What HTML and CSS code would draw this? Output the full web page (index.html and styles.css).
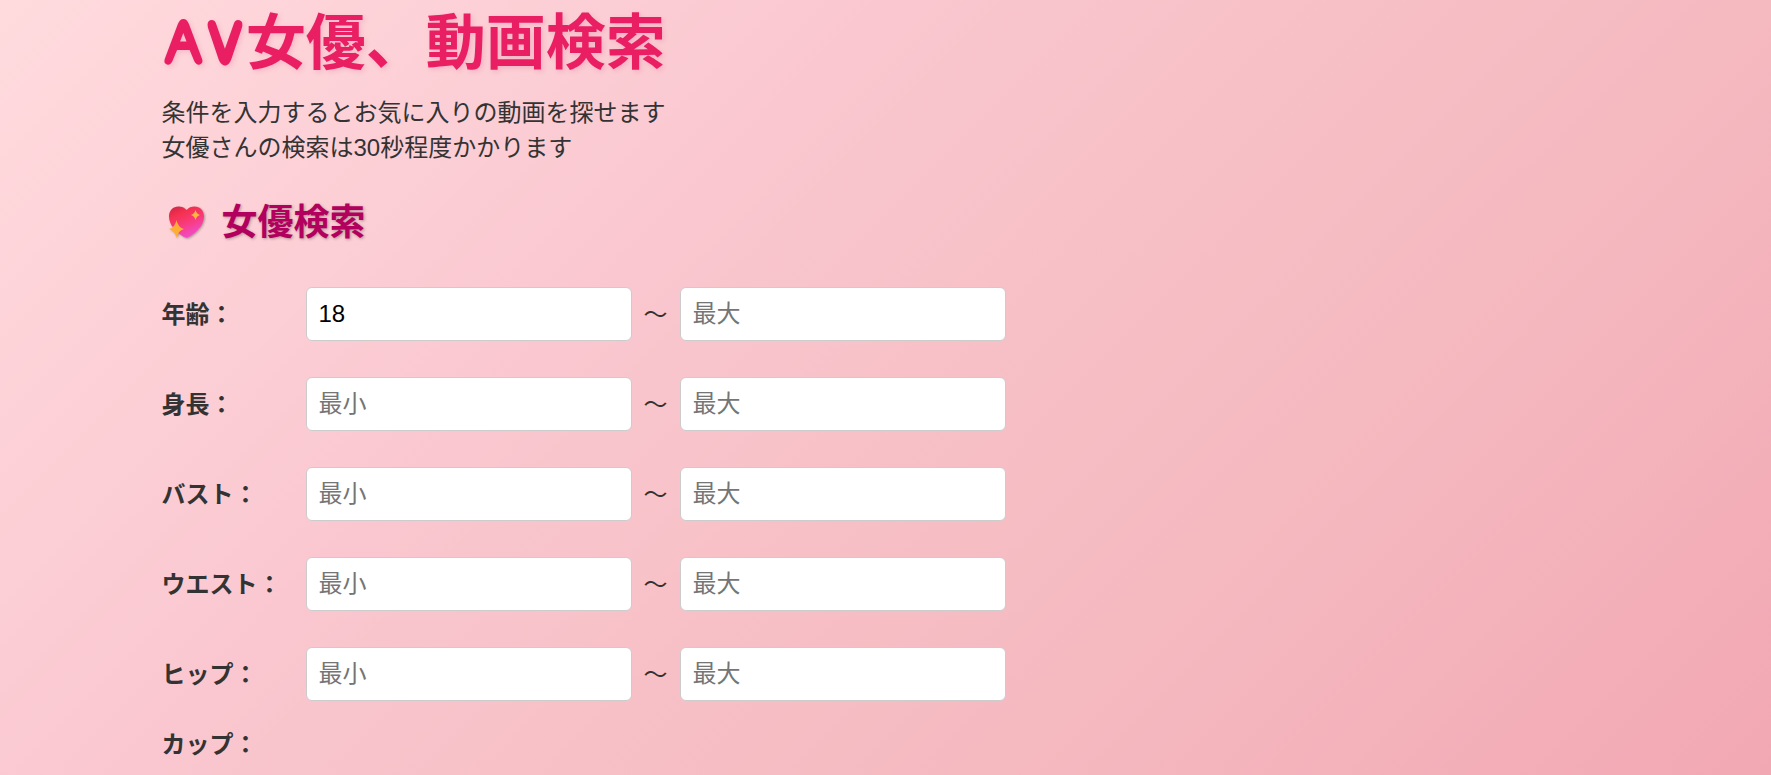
FILE: index.html
```
<!DOCTYPE html>
<html lang="ja">
<head>
<meta charset="utf-8">
<title>AV女優、動画検索</title>
<link rel="stylesheet" href="styles.css">
</head>
<body>
<main class="page">
  <h1 class="title">AV女優、動画検索</h1>
  <p class="lead">条件を入力するとお気に入りの動画を探せます<br>女優さんの検索は30秒程度かかります</p>
  <h2 class="section-title">
    <svg class="heart" viewBox="0 0 48 36" aria-hidden="true">
      <defs>
        <linearGradient id="heart-fill" x1="0" y1="0" x2="0.5" y2="1">
          <stop offset="0" stop-color="#c92448"/>
          <stop offset="0.3" stop-color="#f5304f"/>
          <stop offset="0.6" stop-color="#f83a78"/>
          <stop offset="1" stop-color="#f24bc8"/>
        </linearGradient>
      </defs>
      <path fill="url(#heart-fill)" d="M24.500 5C22.500 2.500 19.500 1.500 16.500 1.500C11 1.500 7 5.500 7 11.500C7 20 14 27 22 32Q24.500 33.500 27 32C35 27 42 20 42 11.500C42 5.500 38 1.500 32.500 1.500C29.500 1.500 26.500 2.500 24.500 5Z"/>
      <path fill="#ffb83d" d="M33.500 5Q34.500 9 38 10Q34.500 11 33.500 15Q32.500 11 29 10Q32.500 9 33.500 5Z"/>
      <path fill="#ffae35" d="M14.500 15Q16 22.500 22 24Q16 25.500 14.500 33Q13 25.500 7 24Q13 22.500 14.500 15Z"/>
    </svg>
    <span>女優検索</span>
  </h2>
  <form class="search">
    <div class="row">
      <label class="label" for="age-min">年齢：</label>
      <input class="field" id="age-min" type="text" value="18" placeholder="最小">
      <span>～</span>
      <input class="field" type="text" placeholder="最大" aria-label="年齢 最大">
    </div>
    <div class="row">
      <label class="label" for="height-min">身長：</label>
      <input class="field" id="height-min" type="text" placeholder="最小">
      <span>～</span>
      <input class="field" type="text" placeholder="最大" aria-label="身長 最大">
    </div>
    <div class="row">
      <label class="label" for="bust-min">バスト：</label>
      <input class="field" id="bust-min" type="text" placeholder="最小">
      <span>～</span>
      <input class="field" type="text" placeholder="最大" aria-label="バスト 最大">
    </div>
    <div class="row">
      <label class="label" for="waist-min">ウエスト：</label>
      <input class="field" id="waist-min" type="text" placeholder="最小">
      <span>～</span>
      <input class="field" type="text" placeholder="最大" aria-label="ウエスト 最大">
    </div>
    <div class="row">
      <label class="label" for="hip-min">ヒップ：</label>
      <input class="field" id="hip-min" type="text" placeholder="最小">
      <span>～</span>
      <input class="field" type="text" placeholder="最大" aria-label="ヒップ 最大">
    </div>
    <div class="row row-cup">
      <span class="label">カップ：</span>
    </div>
  </form>
</main>
</body>
</html>
```
FILE: styles.css
```
* {
  box-sizing: border-box;
}

body {
  margin: 0;
  min-height: 100vh;
  background: linear-gradient(135deg, #ffdbde 0%, #fac7d0 35%, #f7c1c7 50%, #f5b9c0 70%, #f2a8b3 100%);
  color: #333;
  font-family: "Liberation Sans", "Noto Sans CJK JP", sans-serif;
  font-size: 24px;
  line-height: 35px;
}

.page {
  max-width: 1448px;
  margin: 0 auto;
}

.title {
  margin: 0;
  color: #e91e63;
  font-family: "Comic Relief", "Comic Sans MS", "Noto Sans CJK JP", sans-serif;
  font-size: 60px;
  line-height: 86px;
  text-shadow: 2px 2px 5px rgba(200, 30, 99, 0.15);
}

.lead {
  margin: 9px 0 0;
}

.section-title {
  display: flex;
  align-items: center;
  gap: 12px;
  margin: 32px 0 0;
  color: #b3005e;
  font-size: 36px;
  line-height: 52px;
  text-shadow: 1px 1px 3px rgba(0, 0, 0, 0.3);
}

.heart {
  width: 48px;
  height: 36px;
  filter: drop-shadow(1px 1px 1px rgba(0, 0, 0, 0.3));
}

.search {
  display: flex;
  flex-direction: column;
  gap: 36px;
  margin-top: 38px;
}

.row {
  display: flex;
  align-items: center;
  gap: 12px;
}

.row-cup {
  margin-top: -10px;
}

.label {
  width: 132px;
  font-weight: bold;
}

.field {
  width: 326px;
  height: 54px;
  padding: 0 12px;
  border: 1px solid #ccc;
  border-radius: 6px;
  background: #fff;
  color: #000;
  font-family: inherit;
  font-size: 24px;
}

.field::placeholder {
  color: #757575;
}
```
